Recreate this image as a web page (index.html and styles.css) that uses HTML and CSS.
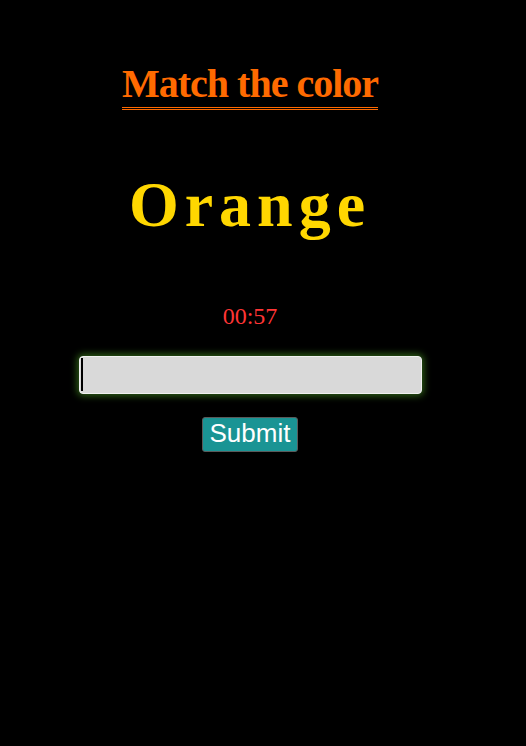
FILE: index.html
```html
<!DOCTYPE html>
<html>
<head>
<meta charset="utf-8">
<link rel="stylesheet" href="styles.css">
</head>
<body>
<div class="wrap">
  <h1 class="title">Match the color</h1>
  <div class="word">Orange</div>
  <div class="timer">00:57</div>
  <div class="field">
    <input class="answer" type="text" autofocus>
  </div>
  <button class="submit">Submit</button>
</div>
</body>
</html>
```
FILE: styles.css
```css
html, body {
  background: #000;
}
body {
  margin: 8px;
  font-family: "Liberation Serif", "Times New Roman", serif;
}
.wrap {
  width: 484px;
  display: flex;
  flex-direction: column;
  align-items: center;
}
.title {
  margin: 53px 0 0;
  color: #ff6a00;
  font-size: 40px;
  font-weight: bold;
  letter-spacing: -1px;
  line-height: 46px;
  border-bottom: 3px double #ff6a00;
}
.word {
  margin-top: 58px;
  color: #ffd700;
  font-size: 64px;
  font-weight: bold;
  letter-spacing: 6px;
  line-height: 74px;
}
.timer {
  margin-top: 60px;
  color: #ff3535;
  font-size: 24px;
  line-height: 28px;
}
.field {
  position: relative;
  margin-top: 26px;
  display: flex;
}
.field::after {
  content: "";
  position: absolute;
  left: 2px;
  top: 2px;
  width: 2px;
  height: 33px;
  background: #000;
}
.answer {
  width: 343px;
  height: 38px;
  box-sizing: border-box;
  background: #d9d9d9;
  border: 1px solid #f0f0f0;
  border-radius: 4px;
  box-shadow: 0 0 7px 2px rgba(60, 125, 30, 0.75);
  outline: none;
  font-size: 20px;
  padding: 2px 4px;
  caret-color: transparent;
}
.submit {
  margin-top: 23px;
  background: #1a9494;
  color: #fff;
  font-family: "Liberation Sans", Arial, sans-serif;
  font-size: 26px;
  border: 1px solid #5a5a5a;
  border-radius: 3px;
  padding: 1px 7px 3px;
  line-height: 29px;
}
```
